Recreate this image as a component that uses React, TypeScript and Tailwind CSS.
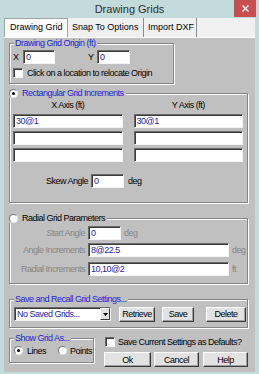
import React from 'react';

// classic win32 dialog pieces, scaled down
const FACE = 'bg-[#c0c0c0]';

function Group({
  legend,
  legendClass = 'left-[4px] px-[1px]',
  className = '',
  children,
}: {
  legend: React.ReactNode;
  legendClass?: string;
  className?: string;
  children?: React.ReactNode;
}) {
  return (
    <div className={`relative border border-[#858585] shadow-[inset_1px_1px_0_#ffffff,1px_1px_0_#ffffff] ${className}`}>
      <div className={`absolute -top-[6px] h-[10px] flex items-center ${FACE} ${legendClass}`}>{legend}</div>
      {children}
    </div>
  );
}

function Field({ value = '', className = '' }: { value?: string; className?: string }) {
  return (
    <div
      className={`h-[14px] shrink-0 bg-white border border-t-[#6b6b6b] border-l-[#6b6b6b] border-b-[#f4f4f4] border-r-[#f4f4f4] shadow-[inset_1px_1px_0_#3a3a3a] pl-[2px] flex items-center text-[#1f1f9c] ${className}`}
    >
      {value}
    </div>
  );
}

function Check() {
  return (
    <div className="w-[10px] h-[10px] shrink-0 bg-white border border-t-[#6b6b6b] border-l-[#6b6b6b] border-b-[#f4f4f4] border-r-[#f4f4f4] shadow-[inset_1px_1px_0_#3a3a3a]" />
  );
}

function Radio({ on = false }: { on?: boolean }) {
  return (
    <div className="w-[9px] h-[9px] shrink-0 rounded-full bg-white border border-t-[#7a7a7a] border-l-[#7a7a7a] border-b-[#e8e8e8] border-r-[#e8e8e8] flex items-center justify-center">
      {on && <div className="w-[3px] h-[3px] rounded-full bg-black" />}
    </div>
  );
}

function Btn({ label, className = '' }: { label: string; className?: string }) {
  return (
    <div
      className={`h-[15px] shrink-0 bg-[#e2e2e2] border border-t-white border-l-white border-b-[#3a3a3a] border-r-[#3a3a3a] shadow-[inset_-1px_-1px_0_#9f9f9f] flex items-center justify-center ${className}`}
    >
      {label}
    </div>
  );
}

export default function App() {
  return (
    <div className="w-[259px] h-[374px] bg-[#c4dbdb] flex flex-col overflow-hidden font-['Liberation_Sans',Arial,sans-serif] text-black">
      {/* title bar */}
      <div className="relative h-[18px] shrink-0 flex items-center justify-center text-[11px] text-[#2e2e2e]">
        <span className="mt-[1px]">Drawing Grids</span>
        <div className="absolute right-[3px] top-0 w-[22px] h-[17px] bg-[#c84f4f] flex items-center justify-center">
          <svg width="7" height="7" viewBox="0 0 7 7">
            <path d="M0.5 0.5L6.5 6.5M6.5 0.5L0.5 6.5" stroke="#ffffff" strokeWidth="1.4" />
          </svg>
        </div>
      </div>

      <div className="flex-1 mx-[4px] mb-[2px] flex flex-col">
        {/* tabs */}
        <div className="h-[20px] shrink-0 flex items-stretch bg-[#f0f0f0] border-b border-white text-[9px]">
          <div className="w-[64px] pl-[5px] flex items-center bg-[#fafafa] border-x border-t border-[#a3a3a3]">Drawing Grid</div>
          <div className="w-[76px] pl-[4px] flex items-center border-r border-[#8c8c8c]">Snap To Options</div>
          <div className="w-[53px] pl-[4px] flex items-center border-r border-[#8c8c8c]">Import DXF</div>
        </div>

        {/* tab page */}
        <div className={`flex-1 ${FACE} pl-[5px] pr-[7px] pt-[5px] text-[9px] tracking-[-0.5px] leading-[10px]`}>
          <Group
            legend={<span className="text-[#2323d6]">Drawing Grid Origin (ft)</span>}
            className="w-[165px] h-[41px] pt-[6px] pl-[3px]"
          >
            <div className="flex items-center h-[14px]">
              <span className="w-[10px]">X</span>
              <Field className="w-[32px]" value="0" />
              <span className="ml-[33px] w-[9px]">Y</span>
              <Field className="w-[33px]" value="0" />
            </div>
            <div className="flex items-center mt-[4px] h-[10px]">
              <Check />
              <span className="ml-[4px]">Click on a location to relocate Origin</span>
            </div>
          </Group>

          <Group
            legendClass="-left-[1px] pr-[2px]"
            legend={
              <>
                <Radio on />
                <span className="ml-[4px] text-[#2323d6]">Rectangular Grid Increments</span>
              </>
            }
            className="mt-[9px] h-[110px] pt-[6px] pl-[3px] pr-[4px]"
          >
            <div className="grid grid-cols-2 gap-x-[11px] h-[10px]">
              <span className="text-center">X Axis (ft)</span>
              <span className="text-center">Y Axis (ft)</span>
            </div>
            <div className="grid grid-cols-2 gap-x-[11px] gap-y-[3px] mt-[4px]">
              <Field value="30@1" />
              <Field value="30@1" />
              <Field />
              <Field />
              <Field />
              <Field />
            </div>
            <div className="flex items-center mt-[12px] h-[14px]">
              <span className="w-[75px] text-right">Skew Angle</span>
              <Field className="ml-[3px] w-[33px]" value="0" />
              <span className="ml-[4px]">deg</span>
            </div>
          </Group>

          <Group
            legendClass="-left-[1px] pr-[2px]"
            legend={
              <>
                <Radio />
                <span className="ml-[4px]">Radial Grid Parameters</span>
              </>
            }
            className="mt-[15px] h-[66px] pt-[7px]"
          >
            <div className="flex items-center h-[14px]">
              <span className="w-[75px] text-right text-[#858585]">Start Angle</span>
              <Field className="ml-[3px] w-[33px]" value="0" />
              <span className="ml-[3px] text-[#858585]">deg</span>
            </div>
            <div className="flex items-center mt-[3px] h-[14px]">
              <span className="w-[75px] text-right text-[#858585]">Angle Increments</span>
              <Field className="ml-[3px] w-[141px]" value="8@22.5" />
              <span className="ml-[3px] text-[#858585]">deg</span>
            </div>
            <div className="flex items-center mt-[5px] h-[14px]">
              <span className="w-[75px] text-right text-[#858585]">Radial Increments</span>
              <Field className="ml-[3px] w-[141px]" value="10,10@2" />
              <span className="ml-[3px] text-[#858585]">ft</span>
            </div>
          </Group>

          <Group
            legend={<span className="text-[#2323d6]">Save and Recall Grid Settings...</span>}
            className="mt-[15px] h-[29px] pt-[7px] pl-[4px]"
          >
            <div className="flex items-center h-[14px]">
              <div className="w-[97px] h-[14px] bg-white border border-t-[#6b6b6b] border-l-[#6b6b6b] border-b-[#f4f4f4] border-r-[#f4f4f4] shadow-[inset_1px_1px_0_#3a3a3a] flex items-stretch">
                <span className="flex-1 pl-[2px] flex items-center text-[#1f1f9c]">No Saved Grids...</span>
                <div className="w-[10px] bg-[#e2e2e2] border border-t-white border-l-white border-b-[#3a3a3a] border-r-[#3a3a3a] flex items-center justify-center">
                  <svg width="5" height="3" viewBox="0 0 5 3">
                    <path d="M0 0H5L2.5 3Z" fill="#000000" />
                  </svg>
                </div>
              </div>
              <Btn label="Retrieve" className="ml-[8px] w-[36px]" />
              <Btn label="Save" className="ml-[7px] w-[32px]" />
              <Btn label="Delete" className="ml-[12px] w-[40px]" />
            </div>
          </Group>

          <div className="flex items-start">
            <Group
              legend={<span className="text-[#2323d6]">Show Grid As...</span>}
              className="mt-[10px] w-[88px] h-[25px] pt-[7px] pl-[4px]"
            >
              <div className="flex items-center h-[9px]">
                <Radio on />
                <span className="ml-[4px] w-[31px]">Lines</span>
                <Radio />
                <span className="ml-[3px]">Points</span>
              </div>
            </Group>
            <div className="ml-[10px] mt-[9px]">
              <div className="flex items-center h-[10px]">
                <div className="ml-[1px]">
                  <Check />
                </div>
                <span className="ml-[3px]">Save Current Settings as Defaults?</span>
              </div>
              <div className="flex items-center mt-[5px]">
                <Btn label="Ok" className="w-[47px]" />
                <Btn label="Cancel" className="ml-[3px] w-[45px]" />
                <Btn label="Help" className="ml-[4px] w-[45px]" />
              </div>
            </div>
          </div>
        </div>
      </div>
    </div>
  );
}
